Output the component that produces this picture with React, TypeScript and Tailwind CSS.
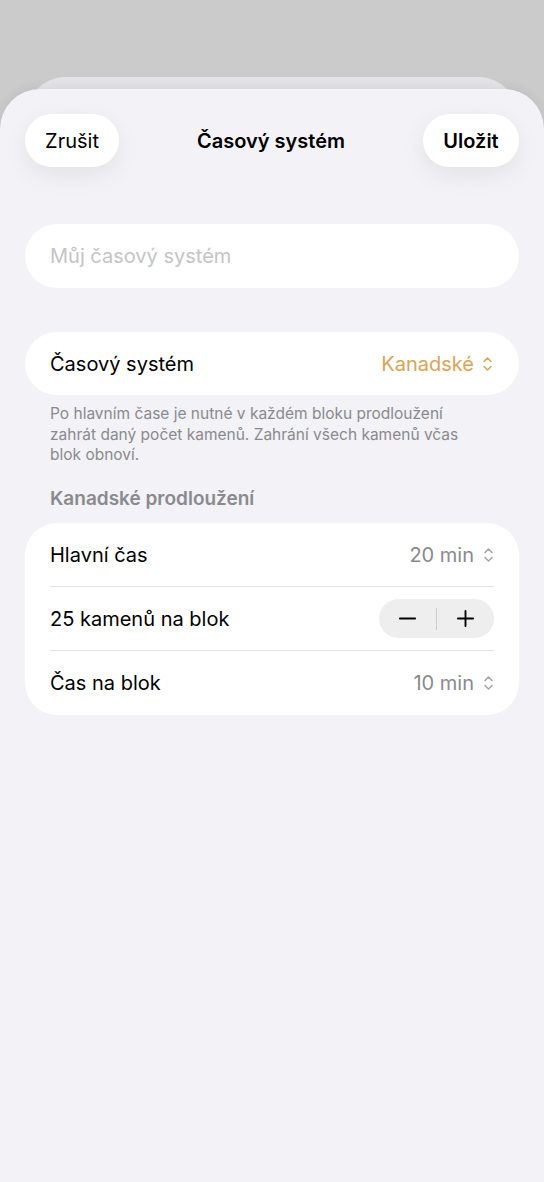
import React, { useState } from 'react';

const Chevrons = ({ className }: { className: string }) => (
  <svg viewBox="0 0 10 16" className={className} fill="none" stroke="currentColor" strokeWidth={1.6} strokeLinecap="round" strokeLinejoin="round">
    <path d="M1.5 5.5 L5 2 L8.5 5.5" />
    <path d="M1.5 10.5 L5 14 L8.5 10.5" />
  </svg>
);

const App = () => {
  const [stones, setStones] = useState(25);

  return (
    <main className="w-[544px] h-[1182px] bg-[#cbcbcb] flex flex-col overflow-hidden font-['Inter','Liberation_Sans',sans-serif]">
      {/* zadní karta */}
      <div className="mt-[77px] mx-[27px] h-[40px] bg-[#e4e4e6] rounded-t-[38px] flex-shrink-0" />

      <div className="-mt-[28px] flex-1 bg-[#f2f2f7] rounded-t-[40px] shadow-[0_-2px_12px_rgba(0,0,0,0.06)] relative">
        <header className="flex items-center justify-between px-[25px] pt-[25px]">
          <button className="h-[53px] w-[94px] rounded-full bg-white text-[20px] text-black shadow-[0_8px_24px_rgba(0,0,0,0.07)]">
            Zrušit
          </button>
          <h1 className="text-[20px] font-semibold text-black">Časový systém</h1>
          <button className="h-[53px] w-[96px] rounded-full bg-white text-[20px] font-semibold text-black shadow-[0_8px_24px_rgba(0,0,0,0.07)]">
            Uložit
          </button>
        </header>

        <section className="px-[25px]">
          <div className="mt-[57px] h-[64px] rounded-full bg-white flex items-center px-[25px]">
            <span className="text-[20px] text-[#c4c4c7]">Můj časový systém</span>
          </div>

          <div className="mt-[44px] h-[63px] rounded-full bg-white flex items-center justify-between pl-[25px] pr-[26px]">
            <span className="text-[20px] text-black">Časový systém</span>
            <span className="flex items-center gap-[8px] text-[20px] text-[#dca456]">
              Kanadské
              <Chevrons className="w-[11px] h-[16px]" />
            </span>
          </div>

          <p className="mt-[9px] pl-[25px] pr-[45px] text-[15.5px] leading-[20.5px] text-[#8a8a8e]">
            Po hlavním čase je nutné v každém bloku prodloužení zahrát daný počet kamenů. Zahrání všech kamenů včas blok obnoví.
          </p>

          <h2 className="mt-[19px] px-[25px] text-[19px] font-semibold text-[#8a8a8e]">Kanadské prodloužení</h2>

          <div className="mt-[10px] rounded-[32px] bg-white px-[25px]">
            <div className="h-[64px] flex items-center justify-between border-b border-[#e2e2e4]">
              <span className="text-[20px] text-black">Hlavní čas</span>
              <span className="flex items-center gap-[9px] text-[20px] text-[#8a8a8e]">
                20 min
                <Chevrons className="w-[11px] h-[16px] text-[#a8a8ac]" />
              </span>
            </div>
            <div className="h-[64px] flex items-center justify-between border-b border-[#e2e2e4]">
              <span className="text-[20px] text-black">{stones} kamenů na blok</span>
              <div className="h-[39px] w-[115px] rounded-full bg-[#eeeeef] flex items-center">
                <button onClick={() => setStones(Math.max(1, stones - 1))} className="flex-1 flex justify-center">
                  <svg viewBox="0 0 20 20" className="w-[19px] h-[19px]" stroke="black" strokeWidth={2} strokeLinecap="round">
                    <path d="M2 10 H18" />
                  </svg>
                </button>
                <div className="w-px h-[22px] bg-[#cdcdd0]" />
                <button onClick={() => setStones(stones + 1)} className="flex-1 flex justify-center">
                  <svg viewBox="0 0 20 20" className="w-[19px] h-[19px]" stroke="black" strokeWidth={2} strokeLinecap="round">
                    <path d="M2 10 H18 M10 2 V18" />
                  </svg>
                </button>
              </div>
            </div>
            <div className="h-[64px] flex items-center justify-between">
              <span className="text-[20px] text-black">Čas na blok</span>
              <span className="flex items-center gap-[9px] text-[20px] text-[#8a8a8e]">
                10 min
                <Chevrons className="w-[11px] h-[16px] text-[#a8a8ac]" />
              </span>
            </div>
          </div>
        </section>
      </div>
    </main>
  );
};

export default App;
